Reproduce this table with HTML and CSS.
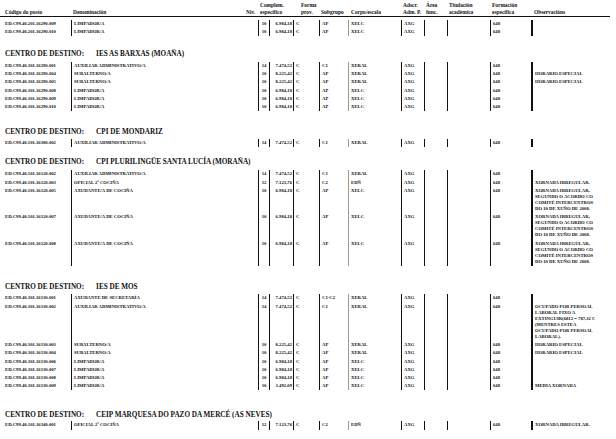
FILE: index.html
```html
<!DOCTYPE html>
<html lang="gl">
<head>
<meta charset="utf-8">
<title>Postos</title>
<link rel="stylesheet" href="styles.css">
</head>
<body>
<div class="doc">
  <div class="thead">
    <div class="h">Código do posto</div>
    <div class="h">Denominación</div>
    <div class="h">Niv.</div>
    <div class="h">Complem.<br>específico</div>
    <div class="h">Forma<br>prov.</div>
    <div class="h">Subgrupo</div>
    <div class="h">Corpo/escala</div>
    <div class="h">Adscr.<br>Adm. P.</div>
    <div class="h">Área<br>func.</div>
    <div class="h">Titulación<br>académica</div>
    <div class="h">Formación<br>específica</div>
    <div class="h">Observacións</div>
  </div>

  <div class="tbl first">
    <div class="row"><div class="c cod">ED.C99.40.201.16290.009</div><div class="c den">LIMPADOR/A</div><div class="c niv">10</div><div class="c comp">6.984,18</div><div class="c">C</div><div class="c">AP</div><div class="c corpo">XELC</div><div class="c">AXG</div><div class="c"></div><div class="c"></div><div class="c">648</div><div class="c obs"></div></div>
    <div class="row"><div class="c cod">ED.C99.40.201.16290.010</div><div class="c den">LIMPADOR/A</div><div class="c niv">10</div><div class="c comp">6.984,18</div><div class="c">C</div><div class="c">AP</div><div class="c corpo">XELC</div><div class="c">AXG</div><div class="c"></div><div class="c"></div><div class="c">648</div><div class="c obs"></div></div>
  </div>

  <h2 class="centro t1"><span class="lbl">CENTRO DE DESTINO:</span>IES AS BARXAS (MOAÑA)</h2>
  <div class="tbl s1">
    <div class="row"><div class="c cod">ED.C99.40.301.16290.001</div><div class="c den">AUXILIAR ADMINISTRATIVO/A</div><div class="c niv">14</div><div class="c comp">7.474,52</div><div class="c">C</div><div class="c">C1</div><div class="c corpo">XERAL</div><div class="c">AXG</div><div class="c"></div><div class="c"></div><div class="c">648</div><div class="c obs"></div></div>
    <div class="row"><div class="c cod">ED.C99.40.301.16290.004</div><div class="c den">SUBALTERNO/A</div><div class="c niv">10</div><div class="c comp">8.225,42</div><div class="c">C</div><div class="c">AP</div><div class="c corpo">XERAL</div><div class="c">AXG</div><div class="c"></div><div class="c"></div><div class="c">648</div><div class="c obs">HORARIO ESPECIAL</div></div>
    <div class="row"><div class="c cod">ED.C99.40.301.16290.005</div><div class="c den">SUBALTERNO/A</div><div class="c niv">10</div><div class="c comp">8.225,42</div><div class="c">C</div><div class="c">AP</div><div class="c corpo">XERAL</div><div class="c">AXG</div><div class="c"></div><div class="c"></div><div class="c">648</div><div class="c obs">HORARIO ESPECIAL</div></div>
    <div class="row"><div class="c cod">ED.C99.40.301.16290.008</div><div class="c den">LIMPADOR/A</div><div class="c niv">10</div><div class="c comp">6.984,18</div><div class="c">C</div><div class="c">AP</div><div class="c corpo">XELC</div><div class="c">AXG</div><div class="c"></div><div class="c"></div><div class="c">648</div><div class="c obs"></div></div>
    <div class="row"><div class="c cod">ED.C99.40.301.16290.009</div><div class="c den">LIMPADOR/A</div><div class="c niv">10</div><div class="c comp">6.984,18</div><div class="c">C</div><div class="c">AP</div><div class="c corpo">XELC</div><div class="c">AXG</div><div class="c"></div><div class="c"></div><div class="c">648</div><div class="c obs"></div></div>
    <div class="row"><div class="c cod">ED.C99.40.301.16290.010</div><div class="c den">LIMPADOR/A</div><div class="c niv">10</div><div class="c comp">6.984,18</div><div class="c">C</div><div class="c">AP</div><div class="c corpo">XELC</div><div class="c">AXG</div><div class="c"></div><div class="c"></div><div class="c">648</div><div class="c obs"></div></div>
  </div>

  <h2 class="centro t2"><span class="lbl">CENTRO DE DESTINO:</span>CPI DE MONDARIZ</h2>
  <div class="tbl">
    <div class="row"><div class="c cod">ED.C99.40.101.16300.002</div><div class="c den">AUXILIAR ADMINISTRATIVO/A</div><div class="c niv">14</div><div class="c comp">7.474,52</div><div class="c">C</div><div class="c">C1</div><div class="c corpo">XERAL</div><div class="c">AXG</div><div class="c"></div><div class="c"></div><div class="c">648</div><div class="c obs"></div></div>
  </div>

  <h2 class="centro t3"><span class="lbl">CENTRO DE DESTINO:</span>CPI PLURILINGÜE SANTA LUCÍA (MORAÑA)</h2>
  <div class="tbl">
    <div class="row"><div class="c cod">ED.C99.40.101.16120.002</div><div class="c den">AUXILIAR ADMINISTRATIVO/A</div><div class="c niv">14</div><div class="c comp">7.474,52</div><div class="c">C</div><div class="c">C1</div><div class="c corpo">XERAL</div><div class="c">AXG</div><div class="c"></div><div class="c"></div><div class="c">648</div><div class="c obs"></div></div>
    <div class="row"><div class="c cod">ED.C99.40.101.16120.003</div><div class="c den">OFICIAL 2ª COCIÑA</div><div class="c niv">12</div><div class="c comp">7.123,76</div><div class="c">C</div><div class="c">C2</div><div class="c corpo">EDÑ</div><div class="c">AXG</div><div class="c"></div><div class="c"></div><div class="c">648</div><div class="c obs">XORNADA IRREGULAR.</div></div>
    <div class="row"><div class="c cod">ED.C99.40.101.16120.005</div><div class="c den">AXUDANTE/A DE COCIÑA</div><div class="c niv">10</div><div class="c comp">6.984,18</div><div class="c">C</div><div class="c">AP</div><div class="c corpo">XELC</div><div class="c">AXG</div><div class="c"></div><div class="c"></div><div class="c">648</div><div class="c obs">XORNADA IRREGULAR,<br>SEGUNDO O ACORDO CO<br>COMITÉ INTERCENTROS<br>DO 10 DE XUÑO DE 2008.</div></div>
    <div class="row"><div class="c cod">ED.C99.40.101.16120.007</div><div class="c den">AXUDANTE/A DE COCIÑA</div><div class="c niv">10</div><div class="c comp">6.984,18</div><div class="c">C</div><div class="c">AP</div><div class="c corpo">XELC</div><div class="c">AXG</div><div class="c"></div><div class="c"></div><div class="c">648</div><div class="c obs">XORNADA IRREGULAR,<br>SEGUNDO O ACORDO CO<br>COMITÉ INTERCENTROS<br>DO 10 DE XUÑO DE 2008.</div></div>
    <div class="row"><div class="c cod">ED.C99.40.101.16120.008</div><div class="c den">AXUDANTE/A DE COCIÑA</div><div class="c niv">10</div><div class="c comp">6.984,18</div><div class="c">C</div><div class="c">AP</div><div class="c corpo">XELC</div><div class="c">AXG</div><div class="c"></div><div class="c"></div><div class="c">648</div><div class="c obs">XORNADA IRREGULAR,<br>SEGUNDO O ACORDO CO<br>COMITÉ INTERCENTROS<br>DO 10 DE XUÑO DE 2008.</div></div>
  </div>

  <h2 class="centro t4"><span class="lbl">CENTRO DE DESTINO:</span>IES DE MOS</h2>
  <div class="tbl">
    <div class="row"><div class="c cod">ED.C99.40.301.16130.001</div><div class="c den">AXUDANTE DE SECRETARÍA</div><div class="c niv">14</div><div class="c comp">7.474,52</div><div class="c">C</div><div class="c">C1-C2</div><div class="c corpo">XERAL</div><div class="c">AXG</div><div class="c"></div><div class="c"></div><div class="c">648</div><div class="c obs"></div></div>
    <div class="row"><div class="c cod">ED.C99.40.301.16130.002</div><div class="c den">AUXILIAR ADMINISTRATIVO/A</div><div class="c niv">14</div><div class="c comp">7.474,52</div><div class="c">C</div><div class="c">C1</div><div class="c corpo">XERAL</div><div class="c">AXG</div><div class="c"></div><div class="c"></div><div class="c">648</div><div class="c obs">OCUPADO POR PERSOAL<br>LABORAL FIXO A<br>EXTINGUIR(6812 = 787,32 €<br>(MENTRES ESTEA<br>OCUPADO POR PERSOAL<br>LABORAL).</div></div>
    <div class="row"><div class="c cod">ED.C99.40.301.16130.003</div><div class="c den">SUBALTERNO/A</div><div class="c niv">10</div><div class="c comp">8.225,42</div><div class="c">C</div><div class="c">AP</div><div class="c corpo">XERAL</div><div class="c">AXG</div><div class="c"></div><div class="c"></div><div class="c">648</div><div class="c obs">HORARIO ESPECIAL</div></div>
    <div class="row"><div class="c cod">ED.C99.40.301.16130.004</div><div class="c den">SUBALTERNO/A</div><div class="c niv">10</div><div class="c comp">8.225,42</div><div class="c">C</div><div class="c">AP</div><div class="c corpo">XERAL</div><div class="c">AXG</div><div class="c"></div><div class="c"></div><div class="c">648</div><div class="c obs">HORARIO ESPECIAL</div></div>
    <div class="row"><div class="c cod">ED.C99.40.301.16130.006</div><div class="c den">LIMPADOR/A</div><div class="c niv">10</div><div class="c comp">6.984,18</div><div class="c">C</div><div class="c">AP</div><div class="c corpo">XELC</div><div class="c">AXG</div><div class="c"></div><div class="c"></div><div class="c">648</div><div class="c obs"></div></div>
    <div class="row"><div class="c cod">ED.C99.40.301.16130.007</div><div class="c den">LIMPADOR/A</div><div class="c niv">10</div><div class="c comp">6.984,18</div><div class="c">C</div><div class="c">AP</div><div class="c corpo">XELC</div><div class="c">AXG</div><div class="c"></div><div class="c"></div><div class="c">648</div><div class="c obs"></div></div>
    <div class="row"><div class="c cod">ED.C99.40.301.16130.008</div><div class="c den">LIMPADOR/A</div><div class="c niv">10</div><div class="c comp">6.984,18</div><div class="c">C</div><div class="c">AP</div><div class="c corpo">XELC</div><div class="c">AXG</div><div class="c"></div><div class="c"></div><div class="c">648</div><div class="c obs"></div></div>
    <div class="row"><div class="c cod">ED.C99.40.301.16130.009</div><div class="c den">LIMPADOR/A</div><div class="c niv">10</div><div class="c comp">3.492,09</div><div class="c">C</div><div class="c">AP</div><div class="c corpo">XELC</div><div class="c">AXG</div><div class="c"></div><div class="c"></div><div class="c">648</div><div class="c obs">MEDIA XORNADA</div></div>
  </div>

  <h2 class="centro t5"><span class="lbl">CENTRO DE DESTINO:</span>CEIP MARQUESA DO PAZO DA MERCÉ (AS NEVES)</h2>
  <div class="tbl">
    <div class="row"><div class="c cod">ED.C99.40.101.16340.001</div><div class="c den">OFICIAL 2ª COCIÑA</div><div class="c niv">12</div><div class="c comp">7.123,76</div><div class="c">C</div><div class="c">C2</div><div class="c corpo">EDÑ</div><div class="c">AXG</div><div class="c"></div><div class="c"></div><div class="c">648</div><div class="c obs">XORNADA IRREGULAR.</div></div>
  </div>
</div>
</body>
</html>
```

FILE: styles.css
```css
html, body {
  margin: 0;
  padding: 0;
  background: #ffffff;
}

.doc {
  color: #111111;
  font-family: "Liberation Serif", "Times New Roman", serif;
  font-weight: bold;
  width: 616px;
  height: 439px;
  overflow: hidden;
}

.thead {
  display: grid;
  grid-template-columns: 71px 173px 14px 41px 20px 30px 52px 23px 23px 43px 42px 1fr;
  align-items: end;
  box-sizing: border-box;
  height: 17px;
  margin-right: 6px;
  border-bottom: 1px solid #111111;
  font-size: 5.4px;
  line-height: 7px;
}

.h {
  padding-left: 2px;
  white-space: nowrap;
}

.h:first-child {
  padding-left: 5px;
}

.tbl {
  display: flex;
  flex-direction: column;
}

.tbl.first {
  margin-top: 3px;
}

.row {
  display: grid;
  grid-template-columns: 71px 187px 11px 24px 26px 29px 53px 23px 23px 43px 41px 1fr;
  font-size: 4.7px;
  line-height: 6.2px;
}

.c {
  padding: 1px 0 1px 2px;
  border-left: 1px solid #111111;
  white-space: nowrap;
}

.c.cod {
  padding-left: 5px;
  border-left: none;
}

.c.niv {
  padding-left: 0;
  text-align: center;
}

.c.comp {
  text-align: right;
  padding-right: 1px;
}

.c.corpo {
  border-left-color: #9a9a9a;
}

.c.obs {
  border-left: 2px solid #111111;
  line-height: 6.1px;
}

.centro {
  margin: 0;
  font-size: 7.2px;
  line-height: 9px;
  font-weight: bold;
  padding-left: 5px;
  white-space: nowrap;
}

.centro .lbl {
  margin-right: 12px;
}

.centro.t1 { margin: 14px 0 2.5px; }
.centro.t2 { margin: 17.2px 0 1.5px; }
.centro.t3 { margin: 11.2px 0 3.2px; }
.centro.t4 { margin: 17px 0 2.5px; }
.centro.t5 { margin: 20.5px 0 1.5px; }
```
